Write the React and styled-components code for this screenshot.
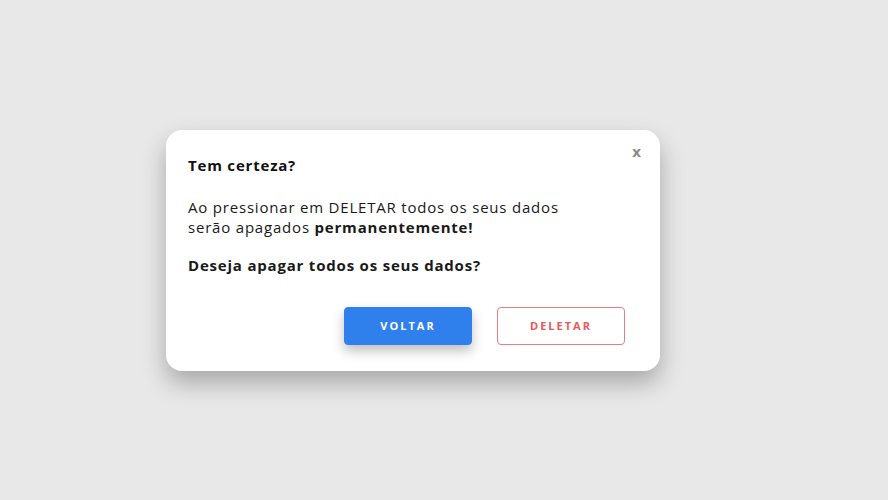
import React from "react"
import styled, { createGlobalStyle } from "styled-components"

const GlobalStyle = createGlobalStyle`
	html, body {
		margin: 0;
		padding: 0;
		background: #e8e8e8;
		font-family: "Open Sans", "Noto Sans", sans-serif;
	}
`

const Page = styled.div`
	width: 888px;
	height: 500px;
	display: flex;
	align-items: center;
	padding-left: 166px;
	box-sizing: border-box;
`

const Modal = styled.div`
	position: relative;
	width: 494px;
	height: 241px;
	box-sizing: border-box;
	background: #fff;
	border-radius: 16px;
	padding: 24px 35px 26px 22px;
	display: flex;
	flex-direction: column;
	box-shadow: 0 12px 24px rgba(0, 0, 0, 0.28);
	letter-spacing: 0.8px;
`

const Close = styled.button`
	position: absolute;
	top: 11px;
	right: 19px;
	border: none;
	background: none;
	font-family: inherit;
	font-size: 15px;
	font-weight: 700;
	color: #8a8a8a;
	cursor: pointer;
	padding: 0;
`

const Title = styled.h2`
	margin: 0;
	font-size: 15px;
	line-height: 22px;
	font-weight: 700;
	color: #111;
`

const Text = styled.p`
	margin: ${props => props.top}px 0 0 0;
	font-size: 15px;
	line-height: 20px;
	font-weight: ${props => (props.bold ? 700 : 400)};
	color: #1a1a1a;
	strong {
		font-weight: 700;
	}
`

const Actions = styled.div`
	margin-top: auto;
	display: flex;
	justify-content: flex-end;
	gap: 25px;
`

const Button = styled.button`
	width: 128px;
	height: 38px;
	border-radius: 4px;
	font-family: inherit;
	font-size: 11px;
	font-weight: 700;
	letter-spacing: 2px;
	cursor: pointer;
	background: ${props => (props.primary ? "#2f80ed" : "#fff")};
	color: ${props => (props.primary ? "#fff" : "#eb5757")};
	border: 1px solid ${props => (props.primary ? "#2f80ed" : "#e57f7f")};
	box-shadow: ${props => (props.primary ? "0 6px 12px rgba(0, 0, 0, 0.25)" : "none")};
`

export default function App() {
	return (
		<Page>
			<GlobalStyle />
			<Modal>
				<Close>x</Close>
				<Title>Tem certeza?</Title>
				<Text top={21}>
					Ao pressionar em DELETAR todos os seus dados
					<br />
					serão apagados <strong>permanentemente!</strong>
				</Text>
				<Text top={18} bold>Deseja apagar todos os seus dados?</Text>
				<Actions>
					<Button primary>VOLTAR</Button>
					<Button>DELETAR</Button>
				</Actions>
			</Modal>
		</Page>
	)
}
